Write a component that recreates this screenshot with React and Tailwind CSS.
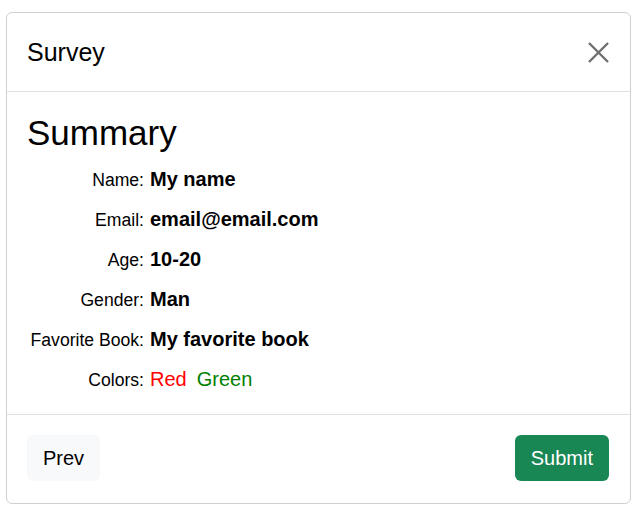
import React from "react";

const rows = [
  { label: "Name:", value: "My name" },
  { label: "Email:", value: "email@email.com" },
  { label: "Age:", value: "10-20" },
  { label: "Gender:", value: "Man" },
  { label: "Favorite Book:", value: "My favorite book" },
];

export default function App() {
  return (
    <div className="w-[642px] h-[518px] bg-white pt-[12px] pl-[6px]" style={{ fontFamily: '"Liberation Sans", Arial, sans-serif' }}>
      <div className="w-[625px] border border-[#d0d0d0] rounded-[6px] bg-white text-black">
        <div className="h-[79px] border-b border-[#dee2e6] flex items-center justify-between pl-[20px] pr-[20px]">
          <h5 className="text-[25px] leading-[30px] font-normal">Survey</h5>
          <svg width="21" height="21" viewBox="0 0 21 21" className="block mr-[1px]">
            <path d="M1 1 L20 20 M20 1 L1 20" stroke="#6f6f6f" strokeWidth="2.4" strokeLinecap="butt" />
          </svg>
        </div>
        <div className="pt-[20px] pb-[15px] pl-[20px] pr-[20px] border-b border-[#dee2e6]">
          <h2 className="text-[35px] leading-[41px] font-normal mb-[6px]">Summary</h2>
          {rows.map((r) => (
            <div key={r.label} className="flex items-baseline h-[40px] leading-[40px]">
              <span className="w-[117px] text-right text-[17.6px] shrink-0">{r.label}</span>
              <span className="ml-[6px] text-[20px] font-bold">{r.value}</span>
            </div>
          ))}
          <div className="flex items-baseline h-[40px] leading-[40px]">
            <span className="w-[117px] text-right text-[17.6px] shrink-0">Colors:</span>
            <span className="ml-[6px] text-[20px] text-[#ff0000]">Red</span>
            <span className="ml-[10px] text-[20px] text-[#008000]">Green</span>
          </div>
        </div>
        <div className="flex justify-between items-center pt-[20px] pb-[22px] pl-[20px] pr-[21px]">
          <button className="bg-[#f8f9fa] text-black text-[20px] leading-[30px] px-[16px] py-[8px] rounded-[6px]">Prev</button>
          <button className="bg-[#198754] text-white text-[20px] leading-[30px] px-[16px] py-[8px] rounded-[6px]">Submit</button>
        </div>
      </div>
    </div>
  );
}
